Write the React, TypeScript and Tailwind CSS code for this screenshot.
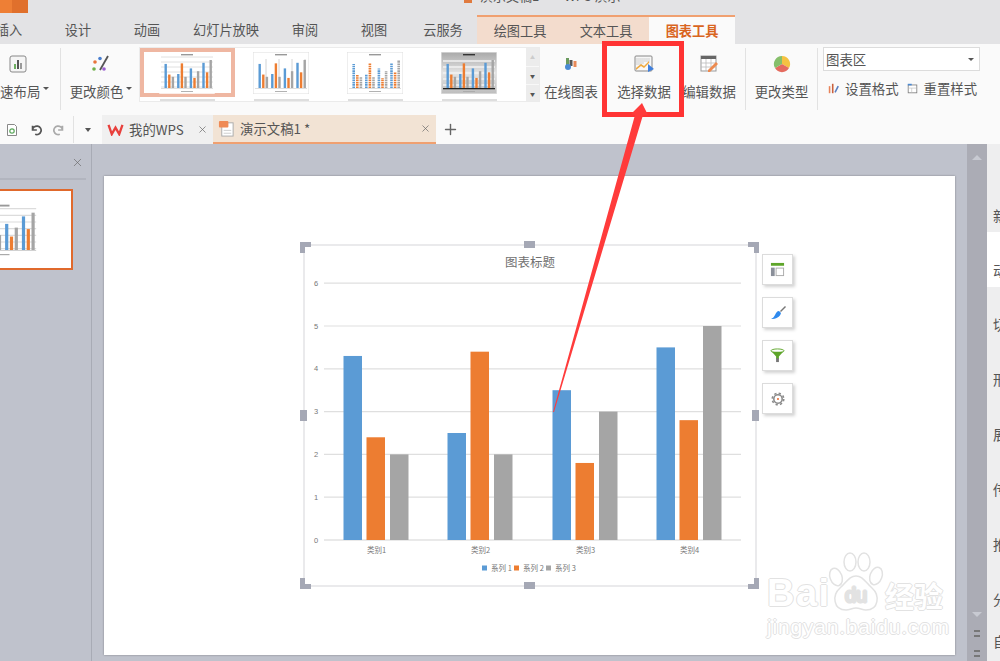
import { X, Plus } from "lucide-react";

const font = "font-['Noto_Sans_CJK_SC','Liberation_Sans',sans-serif]";

const menuTabs = [
  { label: "设计", w: "w-[70px]" },
  { label: "动画", w: "w-[68px]" },
  { label: "幻灯片放映", w: "w-[90px]" },
  { label: "审阅", w: "w-[68px]" },
  { label: "视图", w: "w-[70px]" },
  { label: "云服务", w: "w-[68px]" },
];

const categories = [
  { name: "类别1", x: 362, vals: [4.3, 2.4, 2] },
  { name: "类别2", x: 466, vals: [2.5, 4.4, 2] },
  { name: "类别3", x: 571, vals: [3.5, 1.8, 3] },
  { name: "类别4", x: 675, vals: [4.5, 2.8, 5] },
];

const seriesColors = ["#5b9bd5", "#ed7d31", "#a5a5a5"];
const panelLetters = ["切", "形", "展", "传", "推", "分"];

type MiniProps = {
  variant?: "lines" | "columns" | "dashed" | "dark";
  framed?: boolean;
  className?: string;
};

// small preview used in the style gallery and the slide panel
function MiniChart({ variant = "lines", framed, className = "h-[42px] w-[56px]" }: MiniProps) {
  const dark = variant === "dark";
  return (
    <svg viewBox="0 0 56 42" className={className}>
      <defs>
        <linearGradient id="minidark" x1="0" x2="0" y1="0" y2="1">
          <stop offset="0" stopColor="#a9a9a9" />
          <stop offset="0.5" stopColor="#e4e4e4" />
          <stop offset="1" stopColor="#bdbdbd" />
        </linearGradient>
      </defs>
      <rect x="0.25" y="0.25" width="55.5" height="41.5" fill={dark ? "url(#minidark)" : "#fff"} stroke={framed ? "#dedede" : "none"} strokeWidth="0.5" />
      <rect x="22" y="2" width="12" height="1.4" fill={dark ? "#333" : "#999"} />
      {variant === "lines" &&
        [5, 10, 15, 20, 25, 30, 35].map((y) => (
          <line key={y} x1="2" x2="54" y1={y} y2={y} stroke="#dcdcdc" strokeWidth="0.9" />
        ))}
      {dark &&
        [9, 15, 21, 27, 33].map((y) => (
          <line key={y} x1="2" x2="54" y1={y} y2={y} stroke="#f2f2f2" strokeWidth="1.4" />
        ))}
      {variant === "columns" &&
        [13, 26, 39, 52].map((x) => <line key={x} x1={x} x2={x} y1="7" y2="36" stroke="#d4d4d4" strokeWidth="1" />)}
      {categories.map((c, i) =>
        c.vals.map((v, j) => {
          const x = 5.5 + i * 12.6 + j * 3.6;
          return variant === "dashed" ? (
            <line key={j} x1={x + 1.2} x2={x + 1.2} y1={36} y2={36 - v * 5.6} stroke={seriesColors[j]} strokeWidth="2.6" strokeDasharray="1.6 0.7" />
          ) : (
            <rect key={j} x={x} y={36 - v * 5.6} width="2.4" height={v * 5.6} fill={seriesColors[j]} />
          );
        }),
      )}
      <rect x="2" y="36" width="52" height={dark ? 1.3 : 0.5} fill={dark ? "#222" : "#bbb"} />
      <rect x="22" y="39" width="12" height="0.9" fill="#aaa" />
    </svg>
  );
}

function RibbonButton({ icon, label, w, caret }: { icon: React.ReactNode; label: string; w: string; caret?: boolean }) {
  return (
    <div className={`flex ${w} shrink-0 flex-col items-center`}>
      <div className="flex h-[30px] items-center justify-center">{icon}</div>
      <div className="mt-[3px] flex items-center whitespace-nowrap text-[13.4px] leading-[18px] text-[#555]">
        {label}
        {caret && <span className="ml-[3px] mt-[-5px] border-x-[3px] border-t-[3px] border-x-transparent border-t-[#555]" />}
      </div>
    </div>
  );
}

function ChartSvg() {
  const y0 = 540;
  const unit = 42.8;
  return (
    <svg viewBox="300 238 460 352" className="h-[352px] w-[460px]">
      <rect x="304" y="245" width="452" height="341" fill="#fff" stroke="#e3e3e6" strokeWidth="1.5" />
      <text x="530" y="267" textAnchor="middle" fontSize="12.5" fill="#707070" fontFamily="Noto Sans CJK SC">
        图表标题
      </text>
      {[0, 1, 2, 3, 4, 5, 6].map((n) => (
        <g key={n}>
          <line x1="324" x2="741" y1={y0 - n * unit} y2={y0 - n * unit} stroke={n === 0 ? "#d4d4d4" : "#dfdfdf"} strokeWidth="1.2" />
          <text x="316" y={y0 - n * unit + 2.5} textAnchor="middle" fontSize="7.5" fill="#777" fontFamily="Liberation Sans">
            {n}
          </text>
        </g>
      ))}
      {categories.map((c) => (
        <g key={c.name}>
          {c.vals.map((v, i) => (
            <rect key={i} x={c.x - 18.5 + [0, 23, 46.5][i]} y={y0 - v * unit} width="18.5" height={v * unit} fill={seriesColors[i]} />
          ))}
          <text x={c.x + 14.5} y="553" textAnchor="middle" fontSize="7.5" fill="#777" fontFamily="Noto Sans CJK SC">
            {c.name}
          </text>
        </g>
      ))}
      <rect x="482" y="565.5" width="5" height="5" fill="#5b9bd5" />
      <text x="491" y="571" fontSize="7.5" fill="#777" fontFamily="Noto Sans CJK SC">系列 1</text>
      <rect x="514" y="565.5" width="5" height="5" fill="#ed7d31" />
      <text x="523" y="571" fontSize="7.5" fill="#777" fontFamily="Noto Sans CJK SC">系列 2</text>
      <rect x="546" y="565.5" width="5" height="5" fill="#a5a5a5" />
      <text x="555" y="571" fontSize="7.5" fill="#777" fontFamily="Noto Sans CJK SC">系列 3</text>
      {/* selection handles */}
      <path d="M300 242h11v5h-6v6h-5z" fill="#a5a8b5" />
      <path d="M759 242v11h-5v-6h-6v-5z" fill="#a5a8b5" />
      <path d="M300 589v-11h5v6h6v5z" fill="#a5a8b5" />
      <path d="M759 589v-11h-5v6h-6v5z" fill="#a5a8b5" />
      <rect x="524" y="241" width="11" height="7" fill="#a5a8b5" />
      <rect x="524" y="582" width="11" height="7" fill="#a5a8b5" />
      <rect x="300" y="410" width="7" height="11" fill="#a5a8b5" />
      <rect x="752" y="410" width="7" height="11" fill="#a5a8b5" />
    </svg>
  );
}

function FloatButton({ children }: { children: React.ReactNode }) {
  return (
    <div className="flex h-[31px] w-[31px] items-center justify-center border border-[#dcdcdc] bg-white shadow-[2px_2px_3px_rgba(0,0,0,0.18)]">
      {children}
    </div>
  );
}

function GallerySlot({ variant }: { variant: MiniProps["variant"] }) {
  return (
    <div className="flex w-[94px] shrink-0 flex-col items-center pt-[4px]">
      <MiniChart variant={variant} framed />
      <div className="mt-[5px] h-[2px] w-[55px] shrink-0 bg-[#dedede]" />
    </div>
  );
}

export default function App() {
  return (
    <div className={`relative flex h-[661px] w-[1000px] flex-col overflow-hidden bg-[#bfc2cc] ${font}`}>
      {/* title row */}
      <div className="flex h-[15px] shrink-0 overflow-hidden bg-[#e3e3e5]">
        <div className="flex h-[13px] w-[28px] shrink-0">
          <div className="w-[12px] bg-[#ee7f35]" />
          <div className="flex-1 bg-[#e0702c]" />
        </div>
        <div className="ml-[436px] mt-[-13px] flex h-[18px] items-center whitespace-nowrap text-[13px] leading-[18px] text-[#555]">
          <span className="mb-auto mt-[13px] h-[3px] w-[8px] bg-[#e07a3e]" />
          <span className="ml-[8px]">演示文稿1</span>
          <span className="ml-[25px]">WPS 演示</span>
        </div>
      </div>

      {/* menu tabs */}
      <div className="flex h-[29px] shrink-0 items-stretch bg-[#e3e3e5] text-[13.2px] text-[#555]">
        <div className="ml-[-13px] flex w-[44px] shrink-0 items-center justify-center">插入</div>
        <div className="ml-[12px] flex">
          {menuTabs.map((t) => (
            <div key={t.label} className={`flex ${t.w} shrink-0 items-center justify-center`}>
              {t.label}
            </div>
          ))}
        </div>
        <div className="flex w-[258px] shrink-0 border-t-2 border-[#f0a070]">
          <div className="flex w-[86px] items-center justify-center bg-[#f3dccd]">绘图工具</div>
          <div className="flex w-[86px] items-center justify-center bg-[#f3dccd]">文本工具</div>
          <div className="flex w-[86px] items-center justify-center bg-[#fafafa] font-bold text-[#d9651f]">图表工具</div>
        </div>
      </div>

      {/* ribbon */}
      <div className="flex h-[66px] shrink-0 items-start bg-[#fafafa] pt-[5px]">
        <RibbonButton
          w="w-[60px] ml-[-12px]"
          label="快速布局"
          caret
          icon={
            <svg viewBox="0 0 18 18" className="h-[18px] w-[18px]">
              <rect x="1" y="1" width="16" height="16" rx="2" fill="#f5f5f5" stroke="#888" />
              <rect x="5" y="9" width="2" height="5" fill="#6cae5f" />
              <rect x="8" y="5" width="2" height="9" fill="#555" />
              <rect x="11" y="8" width="2" height="6" fill="#999" />
            </svg>
          }
        />
        <div className="ml-[12px] mt-[-1px] h-[62px] w-px shrink-0 bg-[#e2e2e2]" />
        <RibbonButton
          w="w-[76px] ml-[2px]"
          label="更改颜色"
          caret
          icon={
            <svg viewBox="0 0 20 18" className="h-[18px] w-[20px]">
              <circle cx="4" cy="7" r="1.8" fill="#e8743b" />
              <circle cx="9" cy="3.500" r="1.8" fill="#4a7fd0" />
              <circle cx="3" cy="14" r="1.8" fill="#6fb04a" />
              <circle cx="13" cy="14" r="1.8" fill="#9b5fd0" />
              <path d="M17 1L9 15" stroke="#555" strokeWidth="1.8" />
            </svg>
          }
        />
        <div className="mt-[-2px] flex h-[55px] w-[401px] shrink-0 overflow-hidden border border-[#ebebeb] bg-white">
          <div className="flex w-[94px] shrink-0 flex-col items-center">
            <div className="flex h-[49px] w-[95px] shrink-0 items-center justify-center border-[4px] border-[#efb7a2]">
              <MiniChart />
            </div>
            <div className="mt-[2px] h-[2px] w-[55px] shrink-0 bg-[#dedede]" />
          </div>
          <GallerySlot variant="columns" />
          <GallerySlot variant="dashed" />
          <GallerySlot variant="dark" />
          <div className="ml-auto flex w-[13px] flex-col bg-[#ececec] text-[5px] leading-[18px] text-[#555]">
            <div className="h-[18px] text-center text-[#ccc]">▲</div>
            <div className="h-[18px] border-t border-[#f8f8f8] text-center">▼</div>
            <div className="h-[17px] border-t border-[#f8f8f8] text-center">▼</div>
          </div>
        </div>
        <RibbonButton
          w="w-[62px]"
          label="在线图表"
          icon={
            <svg viewBox="0 0 14 14" className="h-[14px] w-[14px]">
              <rect x="2" y="1" width="3" height="8" fill="#6b9b5e" />
              <rect x="5.500" y="3" width="3" height="6" fill="#555" />
              <rect x="9.500" y="4" width="3" height="6" fill="#e88a5a" />
              <circle cx="4" cy="10" r="3" fill="#4a8ad4" />
            </svg>
          }
        />
        <RibbonButton
          w="w-[84px]"
          label="选择数据"
          icon={
            <svg viewBox="0 0 20 18" className="h-[18px] w-[20px]">
              <rect x="1" y="1" width="17" height="15" rx="1" fill="#f7f7f7" stroke="#888" />
              <path d="M3 3v7M5 3v7M7 3v7M9 3v6M11 3v4M13 3v4M15 3v5" stroke="#bbb" strokeWidth="0.7" />
              <path d="M2 13l5-4 3 2 5-5v2l-5 5-3-2-5 4z" fill="#efa93f" />
              <path d="M14 9l6 5-6 3z" fill="#3f7fdc" />
            </svg>
          }
        />
        <RibbonButton
          w="w-[46px]"
          label="编辑数据"
          icon={
            <svg viewBox="0 0 18 18" className="h-[18px] w-[18px]">
              <rect x="1" y="1" width="15" height="15" fill="#fff" stroke="#999" />
              <rect x="1" y="1" width="15" height="3" fill="#666" />
              <path d="M1 8h15M1 12h15M6 4v12M11 4v12" stroke="#bbb" strokeWidth="0.8" />
              <path d="M8 15l8-8 2 2-8 8H8z" fill="#ed8a4f" />
            </svg>
          }
        />
        <div className="ml-[13px] mt-[-1px] h-[62px] w-px shrink-0 bg-[#e2e2e2]" />
        <RibbonButton
          w="w-[71px]"
          label="更改类型"
          icon={
            <svg viewBox="0 0 18 18" className="h-[18px] w-[18px]">
              <path d="M9 9V1a8 8 0 0 1 7 12z" fill="#f5c242" />
              <path d="M9 9l7 4a8 8 0 0 1-14 0z" fill="#e56b5f" />
              <path d="M9 9L2 13A8 8 0 0 1 9 1z" fill="#86bf6b" />
            </svg>
          }
        />
        <div className="mt-[-1px] h-[62px] w-px shrink-0 bg-[#e2e2e2]" />
        <div className="ml-[5px] mt-[-2px] flex w-[160px] shrink-0 flex-col">
          <div className="flex h-[24px] w-[157px] items-center justify-between border border-[#dcdcdc] bg-white pl-[2px] pr-[5px] text-[13.4px] text-[#555]">
            图表区
            <span className="border-x-[3px] border-t-[3px] border-x-transparent border-t-[#555]" />
          </div>
          <div className="mt-[8px] flex items-center whitespace-nowrap text-[13.4px] leading-[18px] text-[#555]">
            <svg viewBox="0 0 14 14" className="ml-[5px] mr-[6px] h-[11px] w-[11px]">
              <path d="M2 13V4" stroke="#e8835a" strokeWidth="2" />
              <path d="M6 13V1" stroke="#c9603d" strokeWidth="2" />
              <path d="M9 12l4-8" stroke="#5a7fc0" strokeWidth="2" />
            </svg>
            设置格式
            <svg viewBox="0 0 14 14" className="ml-[8px] mr-[6px] h-[11px] w-[11px]">
              <rect x="1.500" y="2.500" width="11" height="10" fill="#fff" stroke="#777" />
              <path d="M1.500 6.500h11M6 6.500v6" stroke="#bbb" strokeWidth="0.8" />
              <path d="M1 2h5" stroke="#4a8ad4" strokeWidth="2" />
            </svg>
            重置样式
          </div>
        </div>
      </div>

      {/* document tabs */}
      <div className="flex h-[34px] shrink-0 bg-[#fafafa] pt-[5px]">
        <div className="flex items-center pl-[5px]">
          <svg viewBox="0 0 14 14" className="h-[14px] w-[14px]">
            <path d="M2.500 1.500h7l2 2v9h-9z" fill="#fff" stroke="#888" />
            <circle cx="7" cy="8" r="2.2" fill="none" stroke="#5aa75a" strokeWidth="1.2" />
          </svg>
          <svg viewBox="0 0 14 14" className="ml-[11px] h-[12px] w-[12px]">
            <path d="M3 2v5h5M3 7a5 5 0 1 1 3 5" fill="none" stroke="#555" strokeWidth="2" />
          </svg>
          <svg viewBox="0 0 14 14" className="ml-[11px] h-[12px] w-[12px]">
            <path d="M11 2v5H6M11 7a5 5 0 1 0-3 5" fill="none" stroke="#aaa" strokeWidth="2" />
          </svg>
          <div className="ml-[8px] h-[27px] w-px bg-[#e2e2e2]" />
          <span className="ml-[11px] border-x-[3.5px] border-t-[4px] border-x-transparent border-t-[#555]" />
        </div>
        <div className="ml-[11px] flex w-[111px] shrink-0 items-center bg-[#f0f0f0] pl-[5px] text-[13.4px] text-[#555]">
          <svg viewBox="0 0 18 14" className="h-[13px] w-[17px]">
            <path d="M1.500 2L5 12l4-7 4 7 3.500-10" fill="none" stroke="#e8403c" strokeWidth="2.500" />
          </svg>
          <span className="ml-[5px] whitespace-nowrap">我的WPS</span>
          <X className="ml-auto mr-[5px] h-[11px] w-[11px] text-[#666]" strokeWidth={1.5} />
        </div>
        <div className="flex w-[223px] shrink-0 items-center border-b-2 border-[#f0a070] bg-[#f2e3d4] pl-[5px] text-[13.4px] text-[#555]">
          <svg viewBox="0 0 18 18" className="h-[17px] w-[17px]">
            <rect x="4" y="3" width="12" height="14" fill="#fff" stroke="#aaa" />
            <rect x="1" y="1" width="10" height="7" rx="1" fill="#ef8a55" />
            <path d="M6 11h8M6 14h8" stroke="#ccc" />
          </svg>
          <span className="ml-[5px] whitespace-nowrap">演示文稿1 *</span>
          <X className="ml-auto mr-[5px] h-[11px] w-[11px] text-[#666]" strokeWidth={1.5} />
        </div>
        <Plus className="ml-[6px] mt-[6px] h-[17px] w-[17px] text-[#666]" strokeWidth={2} />
      </div>

      {/* body */}
      <div className="flex min-h-0 flex-1">
        <div className="flex w-[92px] shrink-0 flex-col border-r border-[#a8abb5]">
          <div className="mr-[5px] flex h-[36px] shrink-0 items-center justify-end border-b-2 border-[#b2b5bf] pr-[2px] pt-[3px]">
            <X className="h-[13px] w-[13px] text-[#666]" strokeWidth={1.2} />
          </div>
          <div className="ml-[-71px] mt-[9px] flex h-[81px] w-[144px] shrink-0 items-center justify-center overflow-hidden border-2 border-[#e0692c] bg-white">
            <MiniChart className="h-[56px] w-[75px] shrink-0" />
          </div>
        </div>
        <div className="relative min-w-0 flex-1">
          <div className="ml-[12px] mt-[32px] h-[479px] w-[851px] bg-white shadow-[0_0_2px_rgba(0,0,0,0.35)]" />
        </div>
        <div className="flex w-[33px] shrink-0">
          <div className="flex w-[20px] flex-col items-center bg-[#abacb5] pb-[4px] pt-[11px] text-[#777]">
            <span className="border-x-[5px] border-b-[5px] border-x-transparent border-b-[#c8cad2]" />
            <span className="mt-auto border-x-[5px] border-t-[5px] border-x-transparent border-t-[#c8cad2]" />
            <span className="mt-[13px] h-[7px] w-[6px] border-y-2 border-[#777]" />
            <span className="mt-[13px] h-[7px] w-[6px] border-y-2 border-[#777]" />
          </div>
          <div className="flex w-[13px] flex-col overflow-hidden bg-[#eeeeef] pl-[6px] text-[14px] leading-[20px] text-[#555]">
            <div className="mt-[33px] h-[55px] shrink-0 whitespace-nowrap pt-[28px]">新</div>
            <div className="-ml-[6px] h-[55px] shrink-0 whitespace-nowrap bg-white pl-[6px] pt-[28px]">动</div>
            {panelLetters.map((c) => (
              <div key={c} className="h-[55px] shrink-0 whitespace-nowrap pt-[27px]">
                {c}
              </div>
            ))}
            <div className="h-[44px] shrink-0 whitespace-nowrap pt-[14px]">自</div>
          </div>
        </div>
      </div>

      {/* chart object on the slide */}
      <div className="absolute left-[300px] top-[238px]">
        <ChartSvg />
      </div>
      <div className="absolute left-[762px] top-[254px] flex flex-col gap-[12px]">
        <FloatButton>
          <svg viewBox="0 0 16 16" className="h-[15px] w-[15px]">
            <rect x="1" y="1" width="14" height="3" fill="#5ea52a" />
            <rect x="1" y="6" width="4" height="9" fill="#8a8f99" />
            <rect x="6.500" y="6.500" width="8" height="8" fill="#fff" stroke="#aaa" />
          </svg>
        </FloatButton>
        <FloatButton>
          <svg viewBox="0 0 16 16" className="h-[16px] w-[16px]">
            <path d="M15 1l-5 5 1 1 5-5z" fill="#777" />
            <path d="M9 6l2 2c-1 4-5 6-10 6 2-1 3-2 4-4 1-2 2-4 4-4z" fill="#2f8aee" />
          </svg>
        </FloatButton>
        <FloatButton>
          <svg viewBox="0 0 16 16" className="h-[15px] w-[15px]">
            <ellipse cx="8" cy="3" rx="7" ry="2" fill="#fff" stroke="#5ea52a" />
            <path d="M2 4h12L9.500 9v3h-3V9z" fill="#5ea52a" />
            <rect x="6.500" y="11" width="3" height="4" fill="#777" />
          </svg>
        </FloatButton>
        <FloatButton>
          <svg viewBox="0 0 16 16" className="h-[14px] w-[14px]">
            <circle cx="8" cy="8" r="4.800" fill="none" stroke="#8a8a8a" strokeWidth="1.8" />
            <circle cx="8" cy="8" r="6.600" fill="none" stroke="#8a8a8a" strokeWidth="1.800" strokeDasharray="2.600 2.580" />
            <circle cx="8" cy="8" r="1.200" fill="#e8703a" />
          </svg>
        </FloatButton>
      </div>

      {/* red annotation */}
      <div className="absolute left-[602px] top-[41px] h-[76px] w-[82px] border-[5px] border-[#ff3333]" />
      <svg className="absolute left-[540px] top-[100px] h-[320px] w-[120px]" viewBox="0 0 120 320">
        <path d="M102 3L108 15L103 15L14 312L13 312L95 15L91 14Z" fill="#ff3b3b" />
      </svg>

      {/* watermark */}
      <div className="absolute left-[767px] top-[552px] flex w-[190px] flex-col items-start leading-none text-white [text-shadow:-1px_0_0_#e2e2e2,1px_0_0_#e2e2e2,0_-1px_0_#e2e2e2,0_1px_0_#e2e2e2]">
        <div className="flex h-[60px] items-end">
          <span className="w-[61px] font-['Liberation_Sans'] text-[38px] font-bold leading-[38px] tracking-[1.5px]">Bai</span>
          <svg viewBox="0 0 56 60" className="h-[60px] w-[56px]" fill="#fff" stroke="#e2e2e2" strokeWidth="1.500">
            <ellipse cx="8" cy="25" rx="6" ry="9" transform="rotate(-20 8 25)" />
            <ellipse cx="22" cy="10" rx="6" ry="9" />
            <ellipse cx="36" cy="10" rx="6" ry="9" />
            <ellipse cx="48" cy="24" rx="6" ry="9" transform="rotate(20 48 24)" />
            <path d="M28 24c7 0 9 6 16 12 8 7 7 22-6 22-4 0-6-2-10-2s-6 2-10 2C5 58 4 43 12 36c7-6 9-12 16-12z" />
            <text x="28" y="50" textAnchor="middle" fontSize="20" fontFamily="Liberation Sans" fill="#fff" stroke="#e2e2e2" strokeWidth="0.8">
              du
            </text>
          </svg>
          <span className="ml-[1px] whitespace-nowrap text-[29px] font-bold leading-[34px]">经验</span>
        </div>
        <div className="mt-[3px] whitespace-nowrap font-['Liberation_Sans'] text-[21px] leading-[24px] tracking-[0.8px]">jingyan.baidu.com</div>
      </div>
    </div>
  );
}
